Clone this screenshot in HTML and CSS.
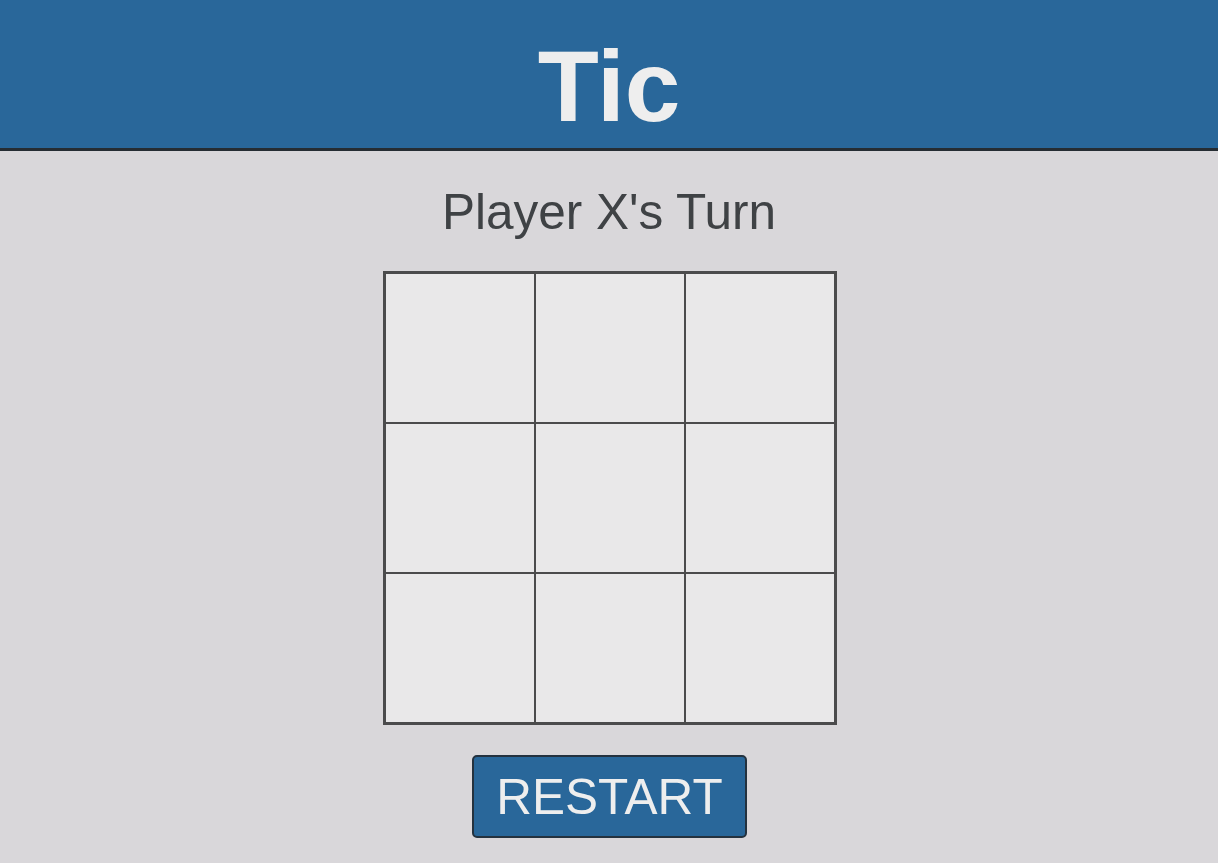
FILE: index.html
```html
<!DOCTYPE html>
<html lang="en">

<head>
    <meta charset="UTF-8">
    <meta name="viewport" content="width=device-width, initial-scale=1.0">
    <title>Tic Tac Toe</title>
    <link rel="stylesheet" href="styles.css">
</head>

<body>
    <header>
        <h1>Tic</h1>
    </header>

    <main>
        <p id="status">Player X's Turn</p>

        <div id="board">
            <div class="cell"></div>
            <div class="cell"></div>
            <div class="cell"></div>
            <div class="cell"></div>
            <div class="cell"></div>
            <div class="cell"></div>
            <div class="cell"></div>
            <div class="cell"></div>
            <div class="cell"></div>
        </div>

        <button id="restart">RESTART</button>
    </main>
</body>

</html>
```

FILE: styles.css
```css
/* General Styles */
body {
    font-family: "Liberation Sans", Arial, sans-serif;
    margin: 0;
    padding: 0;
    background-color: #d9d7da;
    color: #3f4245;
}

header {
    background-color: #29679a;
    border-bottom: 3px solid #262d33;
    text-align: center;
    height: 148px;
    box-sizing: content-box;
}

header h1 {
    margin: 0;
    padding-top: 29px;
    font-size: 100px;
    line-height: 115px;
    font-weight: bold;
    color: #eeeeee;
}

main {
    display: flex;
    flex-direction: column;
    align-items: center;
    padding-top: 33px;
}

#status {
    margin: 0 0 32px;
    font-size: 49.5px;
    line-height: 55px;
}

/* Board */
#board {
    display: grid;
    grid-template-columns: repeat(3, 148px);
    grid-template-rows: repeat(3, 148px);
    gap: 2px;
    border: 3px solid #4b4b4c;
    background-color: #4b4b4c;
    margin: 0 0 30px 1px;
}

.cell {
    background-color: #e9e8e9;
}

#restart {
    font-family: inherit;
    font-size: 49.5px;
    line-height: 55px;
    padding: 12px 22px;
    background-color: #29679a;
    color: #eeeeee;
    border: 2px solid #24323f;
    border-radius: 5px;
    cursor: pointer;
    margin-left: 1px;
}
```
